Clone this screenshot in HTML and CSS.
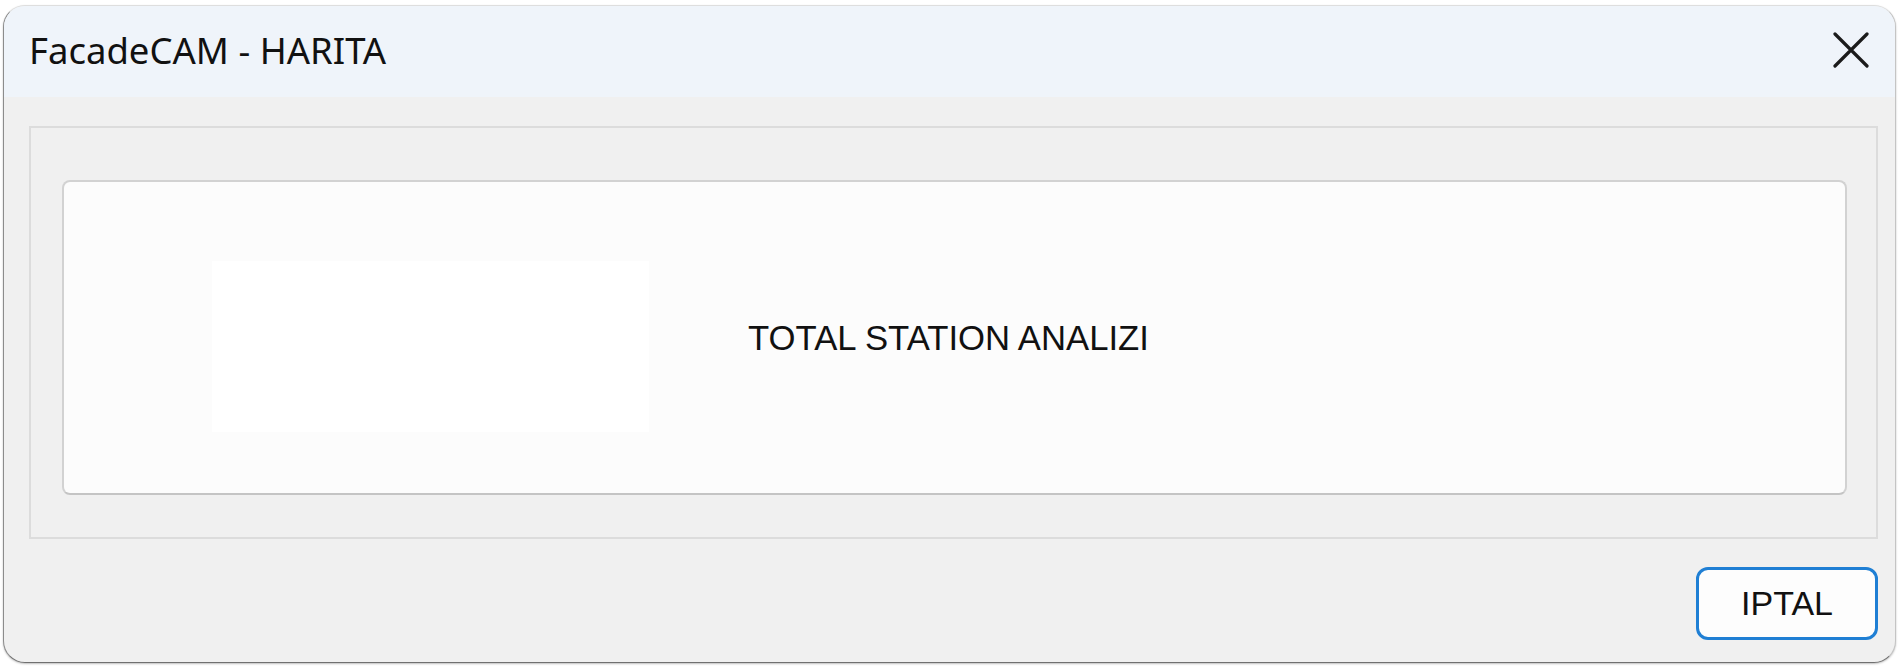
FILE: index.html
```html
<!DOCTYPE html>
<html lang="tr">
<head>
<meta charset="utf-8">
<title>FacadeCAM - HARITA</title>
<link rel="stylesheet" href="styles.css">
</head>
<body>
<div class="window">
  <div class="titlebar">
    <span class="title">FacadeCAM - HARITA</span>
    <button class="close" aria-label="Kapat">
      <svg width="36" height="36" viewBox="0 0 36 36"><path d="M2 2 L34 34 M34 2 L2 34" stroke="#1b1b1b" stroke-width="3.2" stroke-linecap="round" fill="none"/></svg>
    </button>
  </div>
  <div class="content">
    <div class="group">
      <div class="card">
        <div class="picture"></div>
        <div class="label">TOTAL STATION ANALIZI</div>
      </div>
    </div>
    <div class="actions">
      <button class="btn">IPTAL</button>
    </div>
  </div>
</div>
</body>
</html>
```
FILE: styles.css
```css
* { box-sizing: border-box; }
html, body { margin: 0; padding: 0; background: #ffffff; }
body { padding: 5px 0 0 3px; width: 1901px; height: 667px; overflow: hidden; }

.window {
  width: 1893px;
  height: 658px;
  border: 1px solid;
  border-color: #dedede #c4c4c4 #707070 #8c8c8c;
  border-radius: 22px;
  overflow: hidden;
  background: #f0f0f0;
  display: flex;
  flex-direction: column;
  box-shadow: 0 1px 2px rgba(0,0,0,0.25);
}

.titlebar {
  height: 91px;
  flex: none;
  background: #eff4fa;
  display: flex;
  align-items: center;
  justify-content: space-between;
  padding: 0 26px 0 25px;
}
.title {
  font-family: "Noto Sans", "Open Sans", sans-serif;
  font-size: 36.5px;
  color: #111111;
  margin-top: -4px;
}
.close {
  border: none;
  background: transparent;
  padding: 0;
  width: 36px;
  height: 36px;
  display: flex;
  margin-top: -4px;
}

.content {
  flex: 1;
  display: flex;
  flex-direction: column;
  padding: 29px 17px 0 25px;
}

.group {
  height: 413px;
  border: 2px solid #dcdcdc;
  padding: 52px 29px 42px 31px;
}

.card {
  height: 100%;
  background: #fcfcfc;
  border: 2px solid #d2d2d2;
  border-bottom-color: #c4c4c4;
  border-radius: 8px;
  display: flex;
  align-items: center;
  padding-left: 148px;
}
.picture {
  align-self: flex-start;
  margin-top: 79px;
  width: 437px;
  height: 171px;
  background: #ffffff;
  flex: none;
}
.label {
  margin-left: 99px;
  margin-top: 2px;
  font-family: "Liberation Sans", Arial, sans-serif;
  font-size: 34.7px;
  color: #111111;
}

.actions {
  display: flex;
  justify-content: flex-end;
  padding-top: 28px;
}
.btn {
  width: 182px;
  height: 73px;
  background: #fdfdfd;
  border: 3px solid #1f7fd4;
  border-radius: 12px;
  font-family: "Liberation Sans", Arial, sans-serif;
  font-size: 34px;
  color: #111111;
  padding: 0;
}
```
